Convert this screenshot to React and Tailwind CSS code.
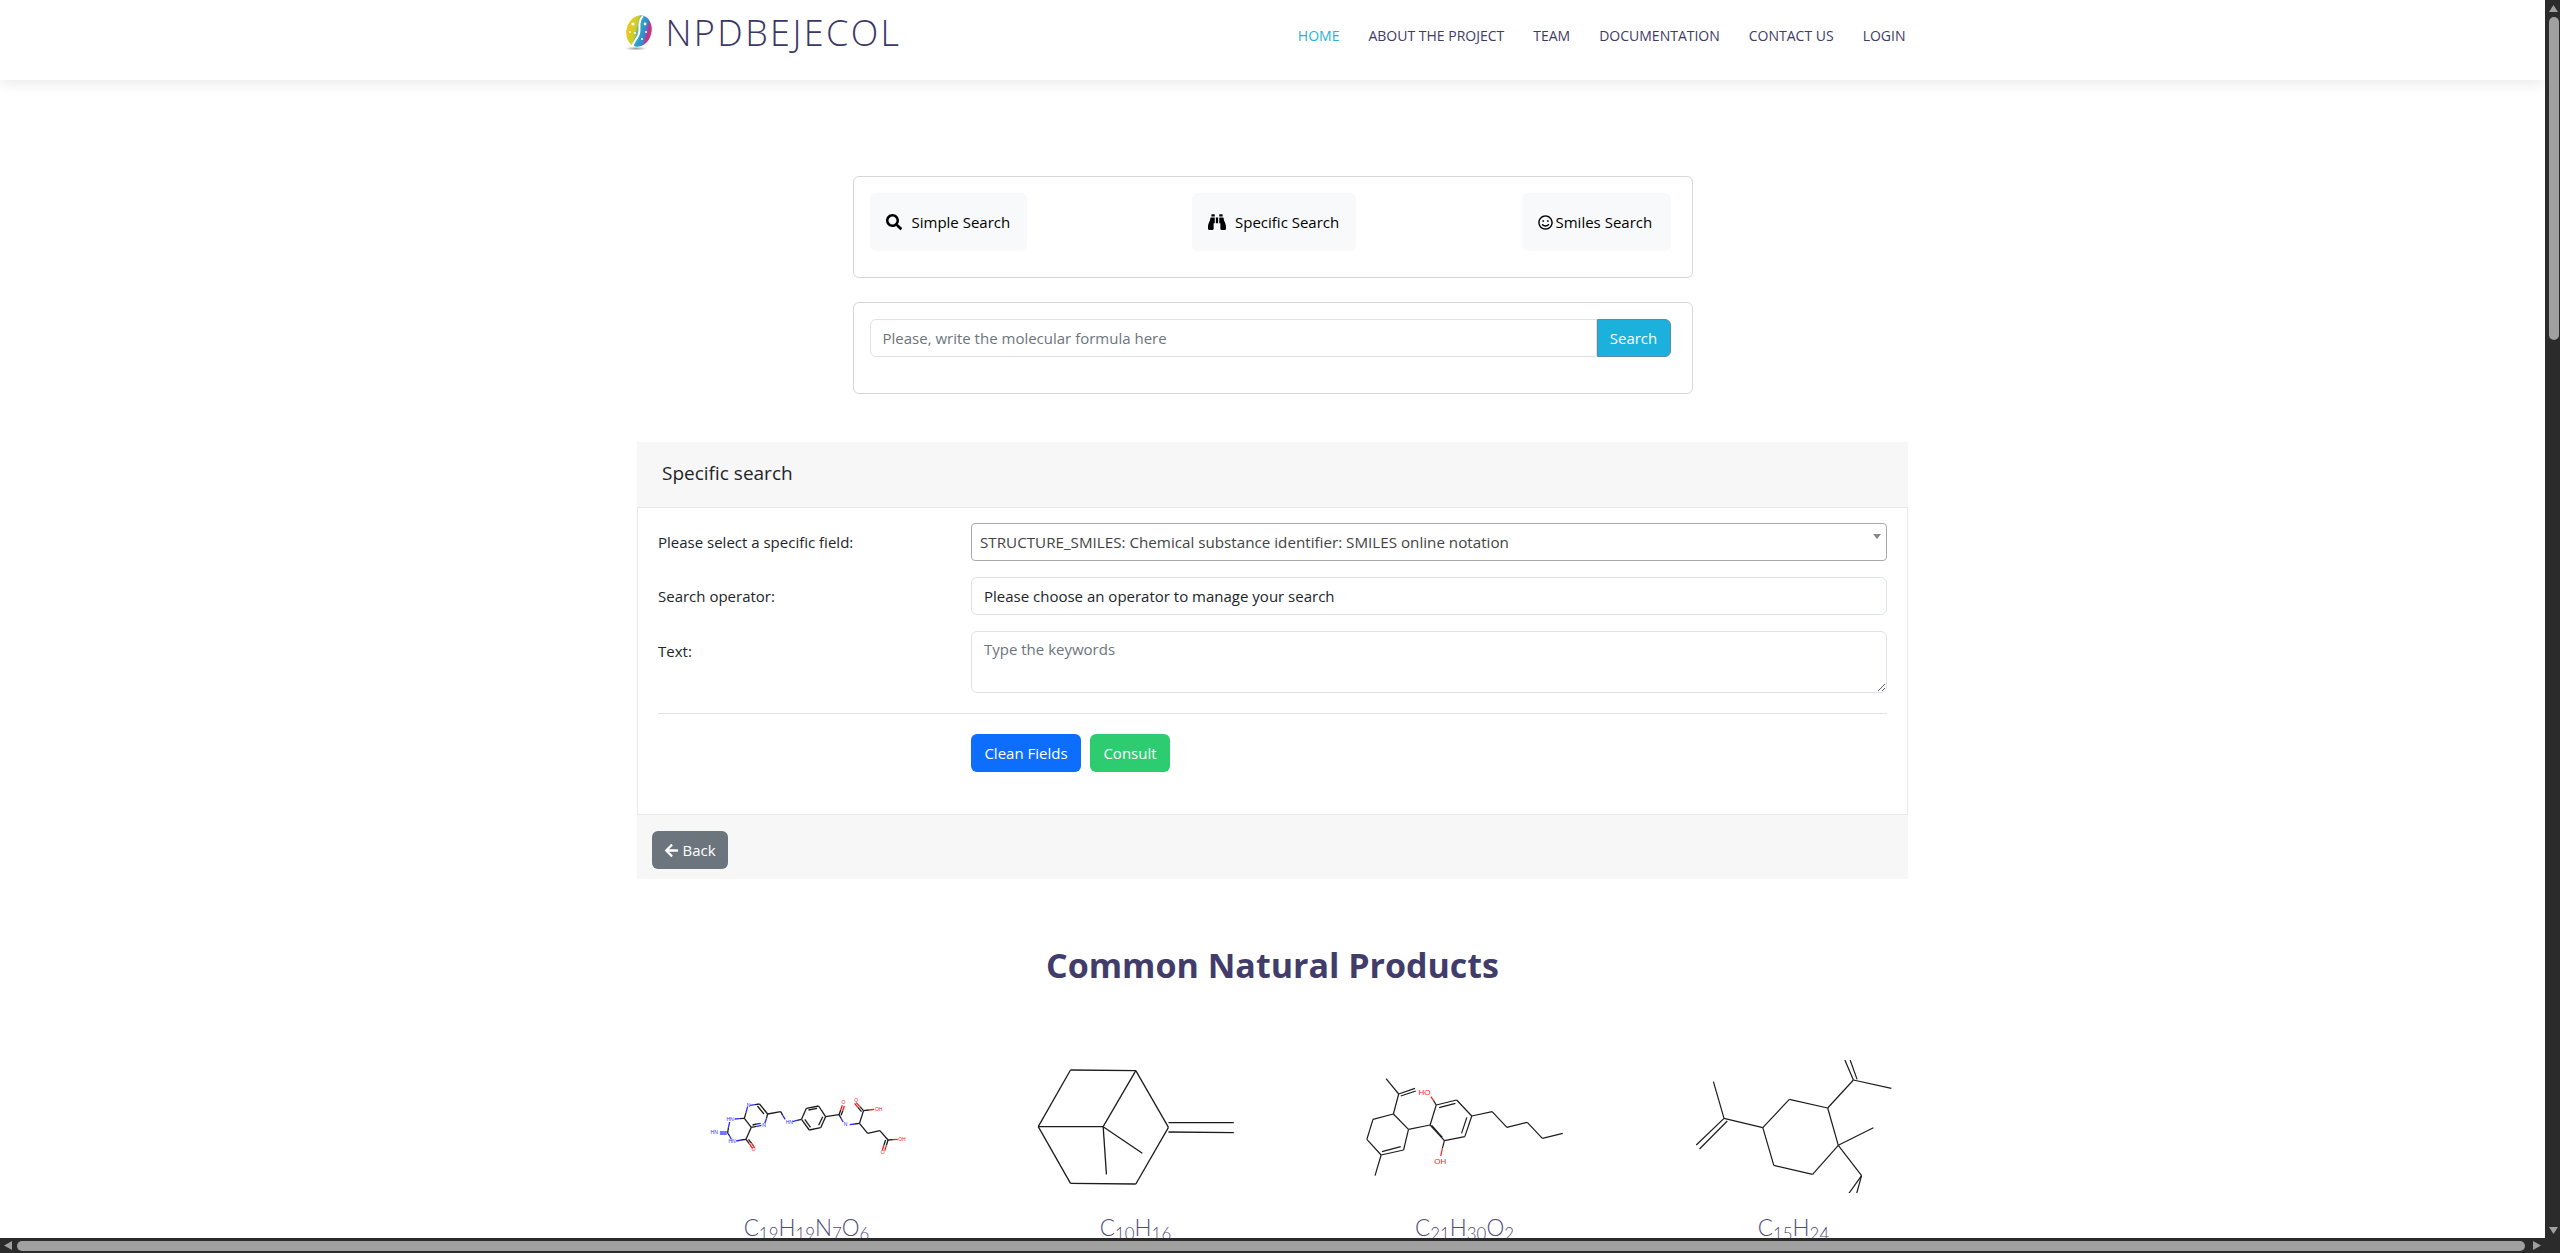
import { FaSearch, FaBinoculars, FaRegSmile, FaArrowLeft } from 'react-icons/fa';

const NAV = ['HOME', 'ABOUT THE PROJECT', 'TEAM', 'DOCUMENTATION', 'CONTACT US', 'LOGIN'];

// segments are read off the reference crops: [x1, y1, x2, y2, colour]
const BLUE = '#2b2bff';
const RED = '#ff1a1a';
const INK = '#1c1c1c';

const MOLECULES = [
    {
        left: 64,
        width: 1.3,
        bonds: [
            [98, 276, 115, 276, BLUE], [98, 282, 115, 282, BLUE],
            [117, 279, 119, 262], [119, 262, 122, 246, BLUE], [117, 279, 122, 288], [122, 288, 126, 298, BLUE],
            [134, 237, 146, 236, BLUE], [146, 236, 158, 235], [158, 235, 175, 262], [175, 262, 162, 298], [162, 298, 150, 300], [150, 300, 138, 303, BLUE],
            [162, 298, 170, 311], [170, 311, 178, 325, RED], [168, 298, 176, 310], [176, 310, 183, 323, RED],
            [158, 235, 162, 218], [162, 218, 166, 200, BLUE], [172, 196, 184, 194, BLUE], [184, 194, 195, 192], [195, 192, 215, 222], [190, 198, 206, 222],
            [215, 222, 212, 236], [212, 236, 208, 250, BLUE], [200, 256, 188, 259, BLUE], [188, 259, 175, 262], [198, 250, 188, 252, BLUE], [188, 252, 178, 255],
            [215, 222, 247, 215], [247, 215, 252, 226], [252, 226, 258, 238, BLUE], [276, 245, 287, 241, BLUE], [287, 241, 298, 238],
            [298, 238, 310, 205], [310, 205, 340, 198], [340, 198, 357, 230], [357, 230, 345, 263],
            [345, 263, 317, 270], [317, 270, 298, 238], [315, 210, 336, 205], [350, 230, 340, 256], [320, 262, 306, 238],
            [357, 230, 390, 224], [390, 224, 394, 210], [394, 210, 398, 196, RED], [395, 226, 399, 212], [399, 212, 403, 198, RED],
            [390, 224, 395, 235], [395, 235, 400, 246, BLUE], [416, 254, 428, 252, BLUE], [428, 252, 440, 250], [440, 250, 450, 212],
            [450, 212, 441, 200], [441, 200, 432, 188, RED], [445, 215, 436, 202], [436, 202, 428, 190, RED], [450, 212, 463, 210], [463, 210, 476, 208, RED],
            [440, 250, 460, 280], [460, 280, 490, 272], [490, 272, 510, 300],
            [510, 300, 506, 316], [506, 316, 502, 332, RED], [504, 300, 500, 315], [500, 315, 496, 330, RED], [510, 300, 522, 299], [522, 299, 534, 298, RED],
        ],
        labels: [
            [84, 283, 'HN', BLUE], [123, 242, 'HN', BLUE], [128, 308, 'HN', BLUE], [168, 200, 'N', BLUE],
            [206, 260, 'N', BLUE], [268, 251, 'HN', BLUE], [406, 258, 'N', BLUE], [181, 333, 'O', RED],
            [401, 193, 'O', RED], [432, 187, 'O', RED], [487, 212, 'OH', RED], [497, 343, 'O', RED], [544, 302, 'OH', RED],
        ],
    },
    {
        left: 870,
        width: 1.3,
        bonds: [
            [957, 90, 1117, 92], [957, 90, 878, 260], [1117, 92, 1197, 262], [1117, 92, 1037, 260],
            [878, 260, 1037, 260], [878, 260, 957, 430], [957, 430, 1117, 432], [1117, 432, 1197, 262],
            [1037, 260, 1133, 340], [1037, 260, 1045, 403], [1197, 248, 1357, 248], [1197, 276, 1357, 278],
        ],
        labels: [],
    },
    {
        left: 108,
        width: 1.2,
        bonds: [
            [162, 116, 193, 162], [193, 162, 233, 145], [198, 168, 235, 153], [193, 162, 180, 222],
            [180, 222, 130, 238], [130, 238, 115, 298], [115, 298, 150, 345], [150, 345, 205, 330],
            [152, 335, 198, 320], [205, 330, 217, 268], [217, 268, 180, 222], [150, 345, 135, 407],
            [217, 268, 270, 255], [270, 255, 285, 195], [285, 195, 335, 180], [292, 203, 332, 190],
            [335, 180, 372, 228], [372, 228, 355, 290], [360, 232, 347, 280], [355, 290, 305, 302],
            [305, 302, 270, 255], [300, 292, 274, 256], [285, 195, 278, 181], [278, 181, 272, 170, RED],
            [305, 302, 300, 325], [300, 325, 296, 348, RED], [372, 228, 422, 215], [422, 215, 458, 262],
            [458, 262, 508, 247], [508, 247, 545, 295], [545, 295, 595, 280],
        ],
        labels: [[256, 164, 'HO', RED], [295, 372, 'OH', RED]],
    },
    {
        left: 914,
        width: 1.2,
        bonds: [
            [964, 125, 990, 235], [990, 235, 922, 315], [998, 243, 930, 327], [990, 235, 1085, 263],
            [1085, 263, 1150, 178], [1150, 178, 1244, 204], [1244, 204, 1270, 316], [1270, 316, 1207, 403],
            [1207, 403, 1112, 376], [1112, 376, 1085, 263], [1244, 204, 1307, 120], [1307, 120, 1400, 145],
            [1307, 120, 1286, 60], [1316, 118, 1299, 60], [1270, 316, 1356, 263], [1270, 316, 1327, 407],
            [1327, 407, 1296, 460], [1327, 407, 1315, 460],
        ],
        labels: [],
    },
];

function Molecule({ left, width, bonds, labels }) {
    const px = (x) => (x - left) / 2.45;
    const py = (y) => (y - 60) / 3;
    return (
        <svg width="200" height="133" viewBox="0 0 200 133" className="block">
            {bonds.map(([x1, y1, x2, y2, colour], i) => (
                <line key={i} x1={px(x1)} y1={py(y1)} x2={px(x2)} y2={py(y2)} stroke={colour || INK} strokeWidth={width} />
            ))}
            {labels.map(([x, y, text, colour], i) => (
                <text key={i} x={px(x)} y={py(y)} fill={colour} fontSize={labels.length > 5 ? 5 : 8} textAnchor="middle" fontFamily="Liberation Sans, sans-serif">
                    {text}
                </text>
            ))}
        </svg>
    );
}

function Logo() {
    return (
        <svg width="30" height="36" viewBox="0 0 30 36" className="block shrink-0">
            <defs>
                <linearGradient id="logoFill" x1="0" y1="0" x2="1" y2="0">
                    <stop offset="0" stopColor="#f3c61c" />
                    <stop offset="0.35" stopColor="#c9cf2e" />
                    <stop offset="0.5" stopColor="#2fa3c9" />
                    <stop offset="0.72" stopColor="#2f8fd0" />
                    <stop offset="0.85" stopColor="#a8409a" />
                    <stop offset="1" stopColor="#e8265e" />
                </linearGradient>
                <radialGradient id="logoShadow">
                    <stop offset="0" stopColor="#9a9a9a" />
                    <stop offset="1" stopColor="#ffffff" />
                </radialGradient>
            </defs>
            <ellipse cx="12" cy="33.5" rx="11" ry="2" fill="url(#logoShadow)" />
            <ellipse cx="15" cy="16" rx="12.5" ry="16" fill="url(#logoFill)" transform="rotate(14 15 16)" />
            <path d="M19 1 C12 8 18 14 14 21 C12 25 9 28 8 32" fill="none" stroke="#ffffff" strokeWidth="2" />
            <circle cx="9" cy="9" r="1.6" fill="#ffffff" />
            <circle cx="6" cy="17" r="1" fill="#ffffff" />
            <circle cx="11" cy="18" r="1" fill="#ffffff" />
            <circle cx="21" cy="9" r="1.4" fill="#ffffff" />
            <circle cx="22" cy="17" r="1" fill="#ffffff" />
            <circle cx="18" cy="24" r="1" fill="#ffffff" />
        </svg>
    );
}

function Arrow({ dir }) {
    const points = { up: '0,7 4.5,0 9,7', down: '0,0 9,0 4.5,7', left: '8,0 8,9 0,4.5', right: '0,0 0,9 8,4.5' };
    const size = dir === 'up' || dir === 'down' ? { width: 9, height: 7 } : { width: 8, height: 9 };
    return (
        <svg {...size} className="block shrink-0">
            <polygon points={points[dir]} fill="#a0a0a0" />
        </svg>
    );
}

function SearchTab({ icon, label, className }) {
    return (
        <button className={`h-[58px] flex items-center rounded-md bg-[#f8f9fa] text-[15px] text-black ${className}`}>
            {icon}
            {label}
        </button>
    );
}

export default function App() {
    return (
        <div className="h-[1253px] w-full flex overflow-hidden bg-white font-['Open_Sans',sans-serif]">
            <div className="w-[2545px] h-full flex flex-col">
                <main className="h-[1238px] overflow-hidden">
                    <header className="h-20 bg-white shadow-[0px_2px_15px_rgba(0,0,0,0.1)]">
                        <div className="w-[1320px] mx-auto h-full pl-[11px] pr-[27px] flex items-start justify-between">
                            <div className="flex items-start pt-[15px]">
                                <Logo />
                                <span className="ml-[12px] -mt-[4px] text-[36px] leading-[44px] font-light tracking-[2.4px] text-[#3b3766]">NPDBEJECOL</span>
                            </div>
                            <nav className="flex gap-[29px] pt-[26px] text-[14px] leading-5 font-medium text-[#3f3b68]">
                                {NAV.map((item) => (
                                    <a key={item} className={item === 'HOME' ? 'text-[#1fb3de]' : ''}>{item}</a>
                                ))}
                            </nav>
                        </div>
                    </header>

                    <section className="w-[840px] mx-auto mt-[96px] h-[102px] border border-[#d6d6d6] rounded-md pt-4 pl-4 pr-[21px] flex items-start justify-between">
                        <SearchTab className="w-[157px] pl-4" icon={<FaSearch className="text-[16px] mr-[10px]" />} label="Simple Search" />
                        <SearchTab className="w-[164px] pl-4" icon={<FaBinoculars className="text-[18px] mr-[9px]" />} label="Specific Search" />
                        <SearchTab className="w-[149px] pl-4" icon={<FaRegSmile className="text-[15px] mr-[3px]" />} label="Smiles Search" />
                    </section>

                    <section className="w-[840px] mx-auto mt-6 h-[92px] border border-[#d6d6d6] rounded-md pt-4 pl-4 pr-5">
                        <div className="flex h-[38px]">
                            <input
                                readOnly
                                placeholder="Please, write the molecular formula here"
                                className="w-[727px] border border-[#dee2e6] rounded-l-md px-3 pt-[1px] text-[15px] text-[#212529] placeholder:text-[#6c757d] outline-none"
                            />
                            <button className="w-[74px] bg-[#1bb1dc] border border-[#5b8ea0] rounded-r-md text-[15px] text-white">Search</button>
                        </div>
                    </section>

                    <section className="w-[1271px] mx-auto mt-12">
                        <div className="h-[66px] bg-[#f7f7f7] border-b border-[#e7e7e7] pl-[25px] pb-[2px] flex items-center text-[19px] text-[#212529]">Specific search</div>
                        <div className="h-[306px] border-x border-[#e7e9ed] px-5 pt-[15px] text-[15px] text-[#212529]">
                            <div className="grid grid-cols-[313px_916px] gap-y-4">
                                <label className="pt-[9px] leading-5">Please select a specific field:</label>
                                <div className="relative h-[38px]">
                                    <select className="appearance-none w-full h-full border border-[#a8a8a8] rounded px-2 pt-[1px] text-[15.2px] text-[#444444] bg-white outline-none">
                                        <option>STRUCTURE_SMILES: Chemical substance identifier: SMILES online notation</option>
                                    </select>
                                    <span className="absolute right-[6px] top-[11px] w-0 h-0 border-x-[4px] border-x-transparent border-t-[5px] border-t-[#888888]" />
                                </div>
                                <label className="pt-[9px] leading-5">Search operator:</label>
                                <select className="appearance-none w-full h-[38px] border border-[#dee2e6] rounded-md px-3 text-[15px] text-[#212529] bg-white outline-none">
                                    <option>Please choose an operator to manage your search</option>
                                </select>
                                <label className="pt-[10px] leading-5">Text:</label>
                                <textarea
                                    readOnly
                                    placeholder="Type the keywords"
                                    className="block w-full h-[62px] border border-[#dee2e6] rounded-md px-3 py-[6px] text-[15px] placeholder:text-[#6c757d] outline-none"
                                />
                            </div>
                            <hr className="mt-5 border-t border-[#e3e4e6]" />
                            <div className="mt-5 ml-[313px] flex gap-[9px]">
                                <button className="w-[110px] h-[38px] rounded-md bg-[#0d6efd] text-white text-[15px]">Clean Fields</button>
                                <button className="w-[80px] h-[38px] rounded-md bg-[#2ecc71] text-white text-[15px]">Consult</button>
                            </div>
                        </div>
                        <div className="h-[65px] bg-[#f7f7f7] border-t border-[#e7e9ed] pl-[15px] pt-[16px]">
                            <button className="w-[76px] h-[38px] rounded-md bg-[#6c757d] text-white text-[15px] flex items-center justify-center gap-[3px]">
                                <FaArrowLeft className="text-[15px]" />
                                Back
                            </button>
                        </div>
                    </section>

                    <h2 className="mt-[62px] text-center font-bold text-[34px] leading-[48px] text-[#413c69]">Common Natural Products</h2>

                    <div className="w-[1271px] mx-auto mt-[71px] pl-[4px] flex">
                        {[
                            <>C<sub>19</sub>H<sub>19</sub>N<sub>7</sub>O<sub>6</sub></>,
                            <>C<sub>10</sub>H<sub>16</sub></>,
                            <>C<sub>21</sub>H<sub>30</sub>O<sub>2</sub></>,
                            <>C<sub>15</sub>H<sub>24</sub></>,
                        ].map((formula, i) => (
                            <div key={i} className="w-[329px] shrink-0 flex flex-col items-center">
                                <Molecule {...MOLECULES[i]} />
                                <p className="mt-[17px] ml-[2px] font-['Lato',sans-serif] font-light text-[22.5px] leading-9 text-[#4f4b78]">{formula}</p>
                            </div>
                        ))}
                    </div>
                </main>

                <div className="h-[15px] bg-[#2b2b2b] flex items-center pl-[4px] pr-[4px]">
                    <Arrow dir="left" />
                    <div className="ml-[5px] w-[2508px] h-[10px] rounded-full bg-[#a0a0a0]" />
                    <div className="ml-auto"><Arrow dir="right" /></div>
                </div>
            </div>

            <div className="w-[15px] h-full bg-[#2b2b2b] flex flex-col items-center pt-[5px] pl-[2px]">
                <Arrow dir="up" />
                <div className="mt-[5px] w-[10px] h-[323px] rounded-full bg-[#a0a0a0]" />
                <div className="mt-auto mb-[19px]"><Arrow dir="down" /></div>
            </div>
        </div>
    );
}
